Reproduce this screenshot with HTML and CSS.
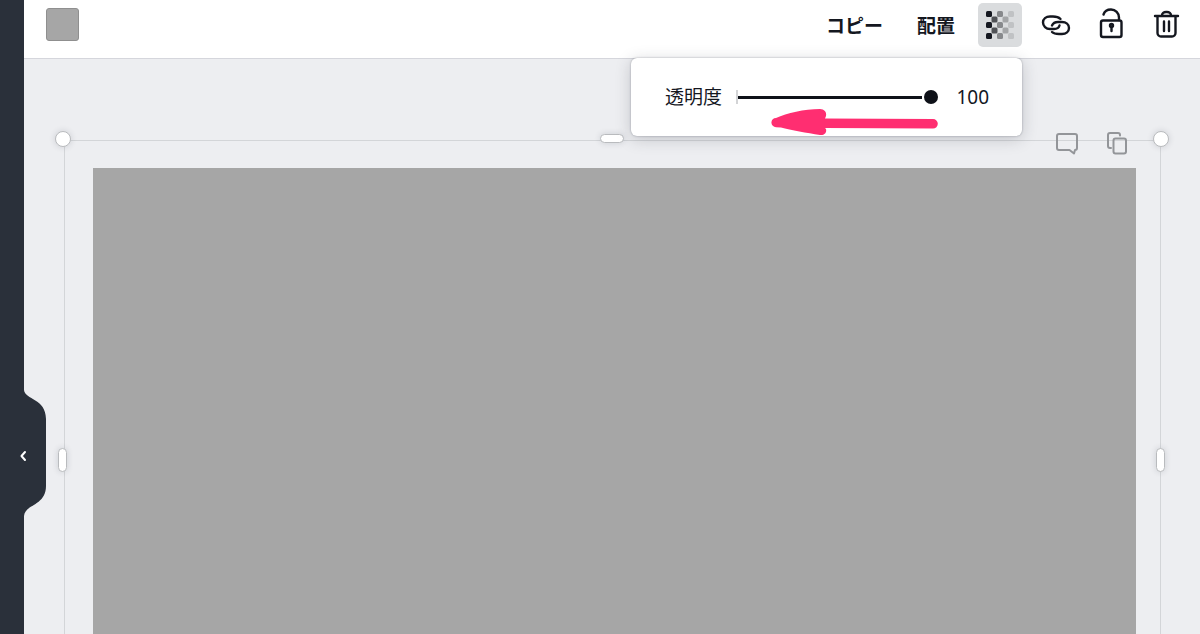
FILE: index.html
```html
<!DOCTYPE html>
<html lang="ja">
<head>
<meta charset="utf-8">
<title>透明度</title>
<link rel="stylesheet" href="styles.css">
</head>
<body>
<div class="app">
  <aside class="sidebar">
    <button class="collapse" type="button" aria-label="サイドパネルを閉じる">
      <svg width="23" height="128" viewBox="0 0 23 128" aria-hidden="true"><path class="tab-shape" d="M0 0C1 10 22 8 22 29V96C22 116 1 114 0 126Z"/></svg>
      <svg class="chevron" width="8" height="12" viewBox="0 0 8 12" aria-hidden="true"><path d="M6 2L2.500 6L6 10"/></svg>
    </button>
  </aside>
  <div class="main">
    <header class="toolbar">
      <button class="swatch" type="button" aria-label="色"></button>
      <div class="actions">
        <button class="text-btn" type="button">コピー</button>
        <button class="text-btn" type="button">配置</button>
        <div class="opacity-menu">
          <button class="icon-btn active" type="button" aria-label="透明度">
            <svg width="44" height="44" viewBox="0 0 44 44" aria-hidden="true">
              <g fill="#14171f"><rect x="8" y="8" width="6" height="6" rx="1.500"/><rect x="8" y="19" width="6" height="6" rx="1.500"/><rect x="8" y="30" width="6" height="6" rx="1.500"/></g>
              <g fill="#505256"><rect x="13.500" y="13.500" width="6" height="6" rx="1.500"/><rect x="13.500" y="24.500" width="6" height="6" rx="1.500"/></g>
              <g fill="#87898c"><rect x="19" y="8" width="6" height="6" rx="1.500"/><rect x="19" y="19" width="6" height="6" rx="1.500"/><rect x="19" y="30" width="6" height="6" rx="1.500"/></g>
              <g fill="#a3a5a7"><rect x="24.500" y="13.500" width="6" height="6" rx="1.500"/><rect x="24.500" y="24.500" width="6" height="6" rx="1.500"/></g>
              <g fill="#c0c2c4"><rect x="30" y="8" width="6" height="6" rx="1.500"/><rect x="30" y="19" width="6" height="6" rx="1.500"/><rect x="30" y="30" width="6" height="6" rx="1.500"/></g>
            </svg>
          </button>
          <div class="popover">
            <label class="popover-label" for="opacity">透明度</label>
            <input class="slider" id="opacity" type="range" min="0" max="100" value="100">
            <output class="value" for="opacity">100</output>
            <svg class="arrow" width="168" height="28" viewBox="0 0 168 28" aria-hidden="true"><path d="M5 9C16 4 33 0 49 0c4 0 7 3 6 7l-1 2.500L162 10a4.800 4.800 0 0 1 0 9.600L54 19l1 1c1 4-2 6.500-6 6C36 24 20 21 10 18.500L5 18.200a4.600 4.600 0 0 1 0-9.200z"/></svg>
          </div>
        </div>
        <button class="icon-btn" type="button" aria-label="リンク">
          <svg width="44" height="44" viewBox="0 0 44 44" aria-hidden="true"><path d="M26.500 16C24.500 14 22 13.500 19 13.500H16C12 13.500 9 16 9 19.500C9 23 12 26 16 26H20C23 26 24.800 24.800 25.500 22.500"/><path d="M18 22.500C19 20.200 21 19 24 19H28C32 19 35 21.500 35 25C35 28.500 32 31 28 31H25C22 31 19.500 30.500 18 29"/></svg>
        </button>
        <button class="icon-btn" type="button" aria-label="ロック">
          <svg width="44" height="44" viewBox="0 0 44 44" aria-hidden="true"><rect x="11" y="17.500" width="20.500" height="16.500" rx="2"/><path d="M13.500 11.500C14.500 8.500 17.500 6.500 21 6.500C25.500 6.500 29 10 29 14.500V17M21.500 23.500V28"/><circle cx="21.500" cy="22.500" r="1.500"/></svg>
        </button>
        <button class="icon-btn" type="button" aria-label="削除">
          <svg width="44" height="44" viewBox="0 0 44 44" aria-hidden="true"><path d="M9 13h23M11.500 13V30a3.500 3.500 0 0 0 3.500 3.500h11a3.500 3.500 0 0 0 3.500-3.500V13M16 12.500a4 3.500 0 0 1 4-3.500h1a4 3.500 0 0 1 4 3.500M18 18.500v9.500M23 18.500v9.500"/></svg>
        </button>
      </div>
    </header>
    <main class="workspace">
      <div class="frame">
        <div class="page"></div>
        <div class="page-tools">
          <button class="page-btn" type="button" aria-label="コメント"><svg width="24" height="24" viewBox="0 0 24 24" aria-hidden="true"><path d="M4 2h16a2 2 0 0 1 2 2v12a2 2 0 0 1-2 2l-1 3.500L14.500 18H4a2 2 0 0 1-2-2V4a2 2 0 0 1 2-2z"/></svg></button>
          <button class="page-btn" type="button" aria-label="複製"><svg width="24" height="24" viewBox="0 0 24 24" aria-hidden="true"><rect x="8.500" y="6.500" width="12.500" height="15" rx="2"/><path d="M15 3.500V3a2 2 0 0 0-2-2H5a2 2 0 0 0-2 2v11a2 2 0 0 0 2 2h1"/></svg></button>
        </div>
        <span class="handle corner top-left"></span>
        <span class="handle corner top-right"></span>
        <span class="handle bar-top"></span>
        <span class="handle bar-side side-left"></span>
        <span class="handle bar-side side-right"></span>
      </div>
    </main>
  </div>
</div>
</body>
</html>
```

FILE: styles.css
```css
* {
  box-sizing: border-box;
}

body {
  margin: 0;
  color: #14171f;
  font-family: "Noto Sans", "Noto Sans CJK JP", sans-serif;
  font-size: 19px;
  line-height: 28px;
}

button {
  display: block;
  margin: 0;
  padding: 0;
  border: 0;
  background: none;
  color: inherit;
  font: inherit;
  cursor: pointer;
}

svg {
  display: block;
}

.app {
  display: grid;
  grid-template-columns: 24px minmax(0, 1fr);
  height: 100vh;
  overflow: hidden;
}

.sidebar {
  position: relative;
  z-index: 1;
  background: #2a303a;
}

.collapse {
  position: absolute;
  top: 390px;
  left: 24px;
}

.tab-shape {
  fill: #2a303a;
}

.chevron {
  position: absolute;
  top: 60px;
  left: -5px;
  fill: none;
  stroke: #fff;
  stroke-width: 2;
  stroke-linecap: round;
  stroke-linejoin: round;
}

.main {
  display: flex;
  flex-direction: column;
  min-width: 0;
}

.toolbar {
  display: flex;
  align-items: flex-start;
  justify-content: space-between;
  padding: 3px 10px 11px 22px;
  border-bottom: 1px solid #d5d6dc;
  background: #fff;
}

.swatch {
  width: 33px;
  height: 33px;
  margin-top: 5px;
  border: 1px solid #8f8f8f;
  border-radius: 3px;
  background: #a6a6a6;
}

.actions {
  display: flex;
  gap: 12px;
}

.text-btn {
  height: 44px;
  padding: 0 11px;
  font-family: "Noto Sans CJK JP", sans-serif;
  font-weight: 700;
}

.icon-btn {
  width: 44px;
  height: 44px;
  border-radius: 5px;
  fill: none;
  stroke: #14171f;
  stroke-width: 2.4;
  stroke-linecap: round;
  stroke-linejoin: round;
}

.active {
  background: #dadcde;
  stroke: none;
}

.opacity-menu {
  position: relative;
}

.popover {
  position: absolute;
  z-index: 2;
  top: 55px;
  right: 0;
  display: flex;
  align-items: center;
  width: 391px;
  height: 78px;
  padding: 0 33px 0 34px;
  border-radius: 6px;
  background: #fff;
  box-shadow: 0 0 2px rgba(40, 45, 60, 0.4), 0 3px 16px rgba(40, 45, 60, 0.22);
}

.popover-label {
  flex: none;
  margin-right: 14px;
}

.slider {
  flex: 1;
  min-width: 0;
  height: 14px;
  margin: 0 18px 0 0;
  border-left: 2px solid #d3d4d6;
  background: linear-gradient(#0e1118, #0e1118) left center / calc(100% - 16px) 3px no-repeat;
  appearance: none;
}

.slider::-webkit-slider-thumb {
  width: 14px;
  height: 14px;
  border-radius: 50%;
  background: #0e1118;
  appearance: none;
}

.value {
  flex: none;
}

.arrow {
  position: absolute;
  top: 51px;
  right: 83px;
  fill: #ff2e71;
}

.workspace {
  flex: 1;
  display: flex;
  min-height: 0;
  padding: 81px 39px 0 40px;
  background: #edeef1;
}

.frame {
  position: relative;
  flex: 1;
  display: flex;
  padding: 27px 24px 0 28px;
  border: 1px solid #d3d5d8;
  border-bottom: 0;
}

.page {
  flex: 1;
  background: #a6a6a6;
}

.page-tools {
  position: absolute;
  top: -9px;
  right: 31px;
  display: flex;
  gap: 26px;
}

.page-btn {
  fill: none;
  stroke: #939599;
  stroke-width: 2;
  stroke-linejoin: round;
  stroke-linecap: round;
}

.handle {
  position: absolute;
  border: 1px solid #b9bbbe;
  border-radius: 9px;
  background: #fff;
  box-shadow: 0 0 6px rgba(40, 45, 60, 0.16);
}

.corner {
  top: -10px;
  width: 16px;
  height: 16px;
}

.top-left {
  left: -10px;
}

.top-right {
  right: -9px;
}

.bar-top {
  top: -7px;
  left: calc(50% - 13px);
  width: 24px;
  height: 9px;
}

.bar-side {
  top: 307px;
  width: 9px;
  height: 24px;
}

.side-left {
  left: -7px;
}

.side-right {
  right: -5px;
}
```
